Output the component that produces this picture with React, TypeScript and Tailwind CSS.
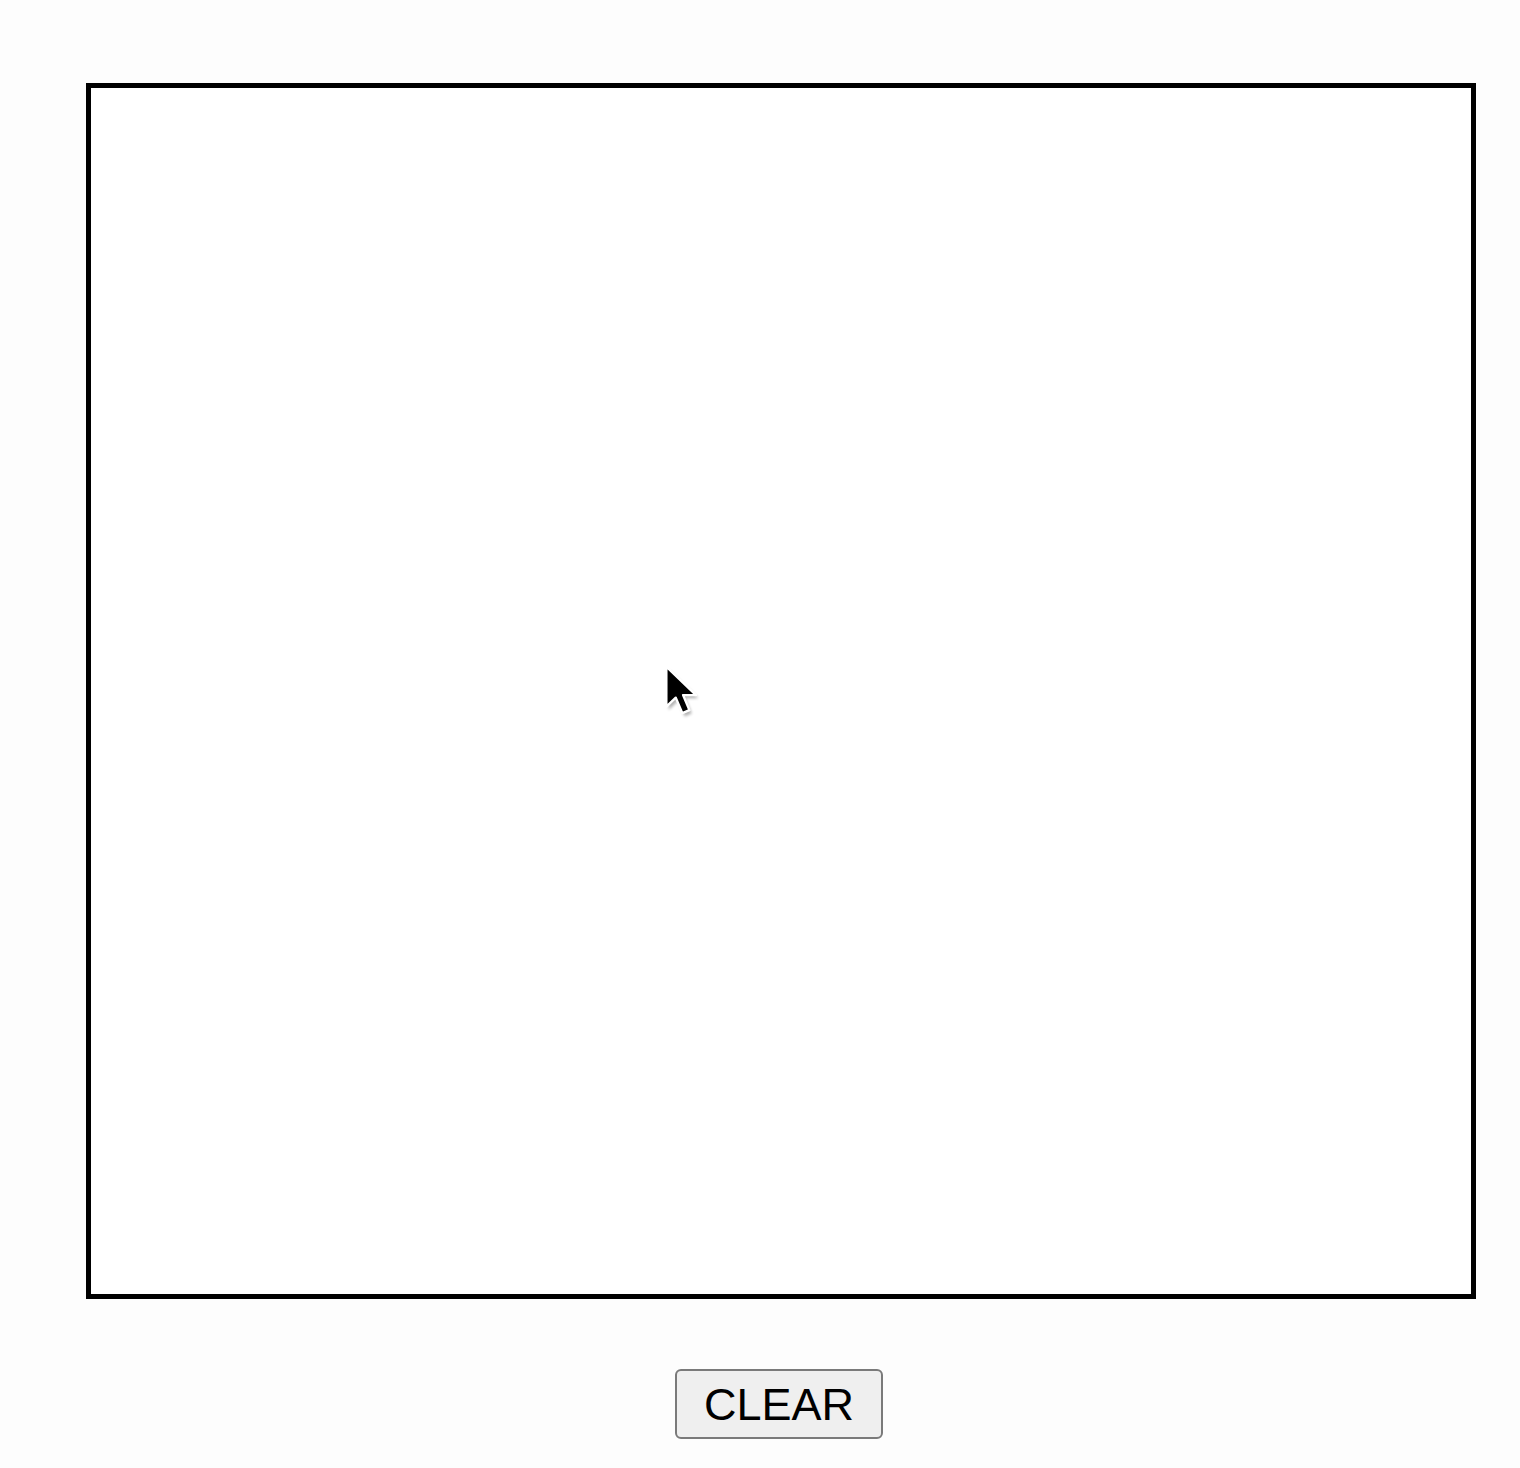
import React from 'react';

const Cursor: React.FC = () => (
  <svg width="40" height="64" viewBox="0 0 17 27" className="absolute left-[664px] top-[664px] pointer-events-none">
    <defs>
      <filter id="sh" x="-50%" y="-50%" width="200%" height="200%">
        <feGaussianBlur stdDeviation="0.6" />
      </filter>
    </defs>
    <path d="M1.6 1.6 L1.6 18.6 L5.6 14.8 L8.4 21.4 L11.4 20.1 L8.7 13.7 L14.2 13.7 Z" fill="#000" opacity="0.3" filter="url(#sh)" transform="translate(0.4 0.8)" />
    <path d="M1 1 L1 18 L5 14.2 L7.8 20.8 L10.8 19.5 L8.1 13.1 L13.6 13.1 Z" fill="#000" stroke="#fff" strokeWidth="1" strokeLinejoin="round" />
  </svg>
);

export default function App() {
  const [strokes, setStrokes] = React.useState(0);

  return (
    <div className="relative min-h-[1468px] w-full bg-[#fdfdfd] pt-[83px] pl-[86px] pr-[44px]" style={{ fontFamily: '"Liberation Sans", Arial, sans-serif' }}>
      <div className="flex w-[1390px] flex-col items-center">
        {/* drawing area */}
        <div
          key={strokes}
          className="h-[1216px] w-[1390px] border-[5px] border-black bg-white"
        />
        <button
          onClick={() => setStrokes((s) => s + 1)}
          className="mt-[70px] mr-[4px] flex h-[70px] w-[208px] items-center justify-center rounded-[6px] border-2 border-[#7a7a7a] bg-[#efefef] text-[45px] leading-none text-black"
        >
          CLEAR
        </button>
      </div>
      <Cursor />
    </div>
  );
}
